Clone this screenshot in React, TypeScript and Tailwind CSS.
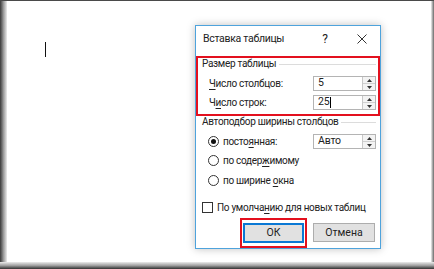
import * as React from "react";

// ── Small pieces ──────────────────────────────────────────────────────────────

function U({ children }: { children: React.ReactNode }) {
  return <span className="underline underline-offset-2 decoration-1">{children}</span>;
}

function Spinner() {
  return (
    <div className="flex w-[13px] flex-col border-l border-[#c8c8c8] bg-[#f3f3f3]">
      <div className="flex flex-1 items-center justify-center border-b border-[#d0d0d0]">
        <svg width="5" height="3" viewBox="0 0 5 3">
          <path d="M0 3 L2.5 0 L5 3 Z" fill="#333" />
        </svg>
      </div>
      <div className="flex flex-1 items-center justify-center">
        <svg width="5" height="3" viewBox="0 0 5 3">
          <path d="M0 0 L2.5 3 L5 0 Z" fill="#333" />
        </svg>
      </div>
    </div>
  );
}

function NumberBox({ value, caret }: { value: string; caret?: boolean }) {
  return (
    <div className="flex h-[15px] w-[63px] border border-[#b4b4b4] bg-white">
      <div className="flex flex-1 items-center pl-[4px] text-[10.5px] leading-none tracking-[-0.2px] text-[#222]">
        {value}
        {caret && <span className="ml-px h-[11px] w-px bg-black" />}
      </div>
      <Spinner />
    </div>
  );
}

function Radio({ checked }: { checked?: boolean }) {
  return (
    <span className="flex h-[11px] w-[11px] shrink-0 items-center justify-center rounded-full border border-[#333] bg-white">
      {checked && <span className="h-[5px] w-[5px] rounded-full bg-[#111]" />}
    </span>
  );
}

const label = "text-[10px] leading-[15px] tracking-[-0.3px] whitespace-nowrap";

// ── Component ─────────────────────────────────────────────────────────────────

export default function App() {
  return (
    <div
      className="flex h-[269px] w-[434px] flex-col overflow-hidden border-t border-[#4a4a4a] bg-white text-[#222]"
      style={{ fontFamily: 'Roboto, "Noto Sans", sans-serif' }}
    >
      <div className="flex flex-1">
        {/* left shadow */}
        <div className="w-[7px] bg-gradient-to-r from-[#3a3a3a] via-[#9a9a9a] to-[#ececec]" />

        {/* document area */}
        <div className="flex flex-1 items-start">
          <div className="ml-[38px] mt-[41px] h-[15px] w-px bg-[#111]" />

          {/* dialog */}
          <div className="ml-[149px] mt-[24px] flex h-[224px] w-[186px] flex-col border border-[#4ea3dc] bg-white shadow-[0_0_8px_rgba(0,0,0,0.25)]">
            {/* title */}
            <div className="flex h-[30px] items-start pl-[7px] pr-[13px] pt-[5px]">
              <span className="text-[10.5px] leading-[16px] tracking-[-0.3px]">Вставка таблицы</span>
              <span className="ml-auto text-[12px] leading-[16px]">?</span>
              <svg className="ml-[29px] mt-[3px]" width="10" height="10" viewBox="0 0 10 10">
                <path d="M0.5 0.5 L9.5 9.5 M9.5 0.5 L0.5 9.5" stroke="#333" strokeWidth="1" />
              </svg>
            </div>

            {/* table size group */}
            <div className="flex h-[60px] flex-col border-2 border-[#e3101e] pl-[4px] pr-[2px]">
              <div className="flex items-center gap-[3px] pt-px">
                <span className="text-[10px] leading-[10px] tracking-[-0.3px]">Размер таблицы</span>
                <div className="h-px flex-1 bg-[#dcdcdc]" />
              </div>
              <div className="mt-[7px] flex items-center pl-[7px]">
                <span className={label}>
                  <U>Ч</U>исло столбцов:
                </span>
                <div className="ml-auto">
                  <NumberBox value="5" />
                </div>
              </div>
              <div className="mt-[4px] flex items-center pl-[7px]">
                <span className={label}>
                  Ч<U>и</U>сло строк:
                </span>
                <div className="ml-auto">
                  <NumberBox value="25" caret />
                </div>
              </div>
            </div>

            {/* autofit group */}
            <div className="flex flex-col pl-[6px] pr-[4px]">
              <div className="flex items-center gap-[3px]">
                <span className="text-[10px] leading-[12px] tracking-[-0.3px]">
                  Автоподбор ширины столбцов
                </span>
                <div className="h-px flex-1 bg-[#dcdcdc]" />
              </div>
              <div className="mt-[6px] flex items-center pl-[6px]">
                <Radio checked />
                <span className={`ml-[4px] ${label}`}>
                  посто<U>я</U>нная:
                </span>
                <div className="ml-auto">
                  <NumberBox value="Авто" />
                </div>
              </div>
              <div className="mt-[4px] flex items-center pl-[6px]">
                <Radio />
                <span className={`ml-[4px] ${label}`}>
                  по содер<U>ж</U>имому
                </span>
              </div>
              <div className="mt-[5px] flex items-center pl-[6px]">
                <Radio />
                <span className={`ml-[4px] ${label}`}>
                  по ширине <U>о</U>кна
                </span>
              </div>
              <div className="mt-[12px] flex items-center">
                <span className="h-[11px] w-[11px] shrink-0 border border-[#333] bg-white" />
                <span className={`ml-[4px] ${label}`}>
                  По умолча<U>н</U>ию для новых таблиц
                </span>
              </div>
            </div>

            {/* buttons */}
            <div className="mt-[3px] flex items-start pl-[44px]">
              <div className="flex h-[30px] w-[67px] items-center justify-center border-2 border-[#e3101e]">
                <div className="flex h-[20px] w-[61px] items-center justify-center border-2 border-[#0a78d4] bg-[#e1e1e1] text-[10.5px]">
                  ОК
                </div>
              </div>
              <div className="ml-[6px] mt-[5px] flex h-[19px] w-[62px] items-center justify-center border border-[#adadad] bg-[#e1e1e1] text-[10.5px]">
                Отмена
              </div>
            </div>
          </div>
        </div>

        {/* right edge */}
        <div className="w-[3px] bg-gradient-to-r from-[#f0f0f0] to-[#6a6a6a]" />
      </div>

      {/* bottom shadow */}
      <div className="h-[7px] bg-gradient-to-b from-[#ececec] via-[#a0a0a0] to-[#333]" />
    </div>
  );
}
